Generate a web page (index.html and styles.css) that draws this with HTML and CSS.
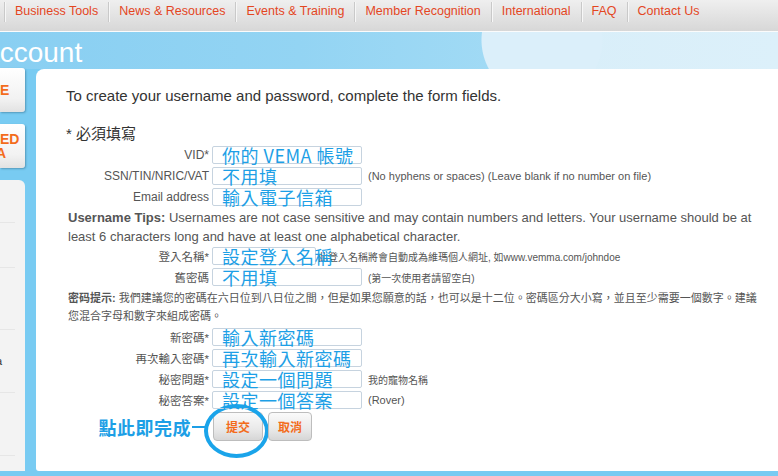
FILE: index.html
```html
<!DOCTYPE html>
<html lang="zh-Hant">
<head>
<meta charset="utf-8">
<title>Create Account</title>
<link rel="stylesheet" href="styles.css">
</head>
<body>
<nav class="nav">
  <a class="nav-item">Business Tools</a>
  <a class="nav-item">News &amp; Resources</a>
  <a class="nav-item">Events &amp; Training</a>
  <a class="nav-item">Member Recognition</a>
  <a class="nav-item">International</a>
  <a class="nav-item">FAQ</a>
  <a class="nav-item">Contact Us</a>
</nav>
<header class="header">
  <h1 class="title">Account</h1>
</header>
<div class="content">
  <aside class="side">
    <div class="side-btn"><span class="side-text">E</span></div>
    <div class="side-btn side-btn-two"><span class="side-text">ED</span><span class="side-text side-text-cut">A</span></div>
    <ul class="side-list">
      <li class="side-item"></li>
      <li class="side-item"></li>
      <li class="side-item"></li>
      <li class="side-item side-item-text"><span class="side-cut">a</span></li>
      <li class="side-item"></li>
      <li class="side-item"></li>
    </ul>
  </aside>
  <main class="panel">
    <p class="intro">To create your username and password, complete the form fields.</p>
    <p class="req">* 必須填寫</p>
    <div class="row"><span class="label">VID*</span><span class="field">你的 VEMA 帳號</span></div>
    <div class="row"><span class="label">SSN/TIN/NRIC/VAT</span><span class="field">不用填</span><span class="hint">(No hyphens or spaces) (Leave blank if no number on file)</span></div>
    <div class="row"><span class="label">Email address</span><span class="field">輸入電子信箱</span></div>
    <p class="tips"><b class="tips-head">Username Tips:</b> Usernames are not case sensitive and may contain numbers and letters. Your username should be at least 6 characters long and have at least one alphabetical character.</p>
    <div class="row row-tight"><span class="label label-cjk">登入名稱*</span><span class="field field-short">設定登入名稱</span><span class="hint hint-cjk hint-tight">此登入名稱將會自動成為維瑪個人網址, 如www.vemma.com/johndoe</span></div>
    <div class="row"><span class="label label-cjk">舊密碼</span><span class="field">不用填</span><span class="hint hint-cjk">(第一次使用者請留空白)</span></div>
    <p class="tips tips-cjk"><b class="tips-head">密码提示:</b> 我們建議您的密碼在六日位到八日位之間，但是如果您願意的話，也可以是十二位。密碼區分大小寫，並且至少需要一個數字。建議您混合字母和數字來組成密碼。</p>
    <div class="row"><span class="label label-cjk">新密碼*</span><span class="field">輸入新密碼</span></div>
    <div class="row"><span class="label label-cjk">再次輸入密碼*</span><span class="field">再次輸入新密碼</span></div>
    <div class="row"><span class="label label-cjk">秘密問題*</span><span class="field">設定一個問題</span><span class="hint hint-cjk">我的寵物名稱</span></div>
    <div class="row"><span class="label label-cjk">秘密答案*</span><span class="field">設定一個答案</span><span class="hint">(Rover)</span></div>
    <div class="actions">
      <span class="note">點此即完成<span class="note-line"></span></span>
      <button class="btn btn-submit">提交<span class="circle"></span></button>
      <button class="btn">取消</button>
    </div>
  </main>
</div>
</body>
</html>
```

FILE: styles.css
```css
html, body {
  margin: 0;
  padding: 0;
}
body {
  width: 778px;
  height: 476px;
  overflow: hidden;
  font-family: "Liberation Sans", "Noto Sans CJK TC", sans-serif;
  background: #78cbf2;
}

/* top navigation */
.nav {
  display: flex;
  height: 31px;
  padding-left: 4px;
  background: linear-gradient(#efefef, #d7d7d7);
  border-bottom: 1px solid #fbfbfb;
  box-sizing: content-box;
}
.nav-item {
  display: block;
  margin-top: 2px;
  height: 18px;
  padding: 2px 10px 0 10px;
  border-left: 1px solid #c9c9c9;
  box-shadow: inset 1px 0 0 #f7f7f7;
  font-size: 12.5px;
  line-height: 15px;
  color: #e4461f;
  white-space: nowrap;
}

/* header band */
.header {
  height: 37px;
  background:
    radial-gradient(circle at 542px 8px, #dbeffa 0, #dbeffa 60px, rgba(219,239,250,0) 61px),
    linear-gradient(90deg, #89cff2 0, #93d4f3 300px, #a3dbf5 525px, #d8eef9 528px, #dcf0fa 100%);
  overflow: hidden;
}
.title {
  margin: 0 0 0 -19px;
  font-weight: normal;
  font-size: 28px;
  line-height: 37px;
  color: #ffffff;
  padding-top: 2px;
}

/* content area */
.content {
  display: flex;
  height: 407px;
  padding-bottom: 5px;
  box-sizing: border-box;
  gap: 11px;
}
.side {
  width: 25px;
  display: flex;
  flex-direction: column;
}
.side-btn {
  height: 44px;
  margin-top: -1px;
  background: linear-gradient(#ffffff, #f2f2f2 70%, #e2e2e2);
  border-radius: 0 3px 3px 0;
  box-shadow: 1px 1px 2px rgba(40,90,120,0.45);
  display: flex;
  flex-direction: column;
  justify-content: center;
  overflow: hidden;
}
.side-btn-two {
  margin-top: 12px;
}
.side-text {
  font-size: 14px;
  font-weight: bold;
  line-height: 14px;
  color: #f36c1c;
}
.side-text-cut {
  margin-left: -4px;
}
.side-list {
  list-style: none;
  margin: 12px 0 0 0;
  padding: 0;
  background: #f3f3f3;
  border-radius: 0 6px 0 0;
  flex: 1;
  overflow: hidden;
}
.side-item {
  height: 42px;
  border-bottom: 1px solid #e6e6e6;
  margin-right: 10px;
}
.side-item:nth-child(2) { height: 44px; }
.side-item:nth-child(3) { height: 61px; }
.side-item:nth-child(4) { height: 62px; }
.side-item:nth-child(5) { height: 62px; }
.side-item:nth-child(6) { border-bottom: none; }
.side-item-text {
  display: flex;
  align-items: center;
}
.side-cut {
  margin-left: -4px;
  font-size: 11px;
  color: #333;
}

/* main panel */
.panel {
  flex: 1;
  background: #ffffff;
  border-radius: 8px 0 0 3px;
  padding: 18px 0 0 30px;
  box-sizing: border-box;
  color: #555;
}
.intro {
  margin: 0;
  font-size: 15px;
  line-height: 18px;
  color: #333;
}
.req {
  margin: 20px 0 2px 0;
  font-size: 15px;
  line-height: 18px;
  color: #333;
}
.row {
  display: flex;
  align-items: center;
  height: 18px;
  margin-top: 3px;
}
.row-tight {
  margin-top: 1px;
}
.label {
  width: 143px;
  flex: none;
  text-align: right;
  font-size: 12px;
  color: #555;
  white-space: nowrap;
}
.label-cjk {
  font-size: 11.5px;
}
.field {
  position: relative;
  z-index: 1;
  flex: none;
  width: 150px;
  height: 18px;
  margin-left: 3px;
  box-sizing: border-box;
  border: 1px solid #c6d3df;
  border-radius: 2px;
  padding-left: 9px;
  font-family: "Noto Sans CJK TC", "Liberation Sans", sans-serif;
  font-size: 18px;
  line-height: 16px;
  letter-spacing: 0.5px;
  color: #1d9fe6;
  white-space: nowrap;
}
.field-short {
  width: 104px;
}
.hint {
  margin-left: 6px;
  font-size: 11px;
  color: #555;
  white-space: nowrap;
}
.hint-cjk {
  font-size: 10px;
}
.hint-tight {
  margin-left: 2px;
}
.tips {
  margin: 2px 0 0 2px;
  width: 692px;
  font-size: 13px;
  line-height: 19px;
  color: #555;
}
.tips-cjk {
  margin-top: 3px;
  font-size: 11px;
  line-height: 18px;
}
.tips-head {
  color: #555;
}

/* actions */
.actions {
  display: flex;
  align-items: center;
  margin-top: 3px;
  height: 29px;
}
.note {
  width: 141px;
  flex: none;
  display: flex;
  justify-content: flex-end;
  align-items: center;
  font-family: "Noto Sans CJK TC", sans-serif;
  font-size: 18px;
  font-weight: bold;
  color: #1d9fe6;
  letter-spacing: 0.5px;
}
.note-line {
  display: block;
  width: 15px;
  height: 2px;
  background: #1d9fe6;
  margin-left: 1px;
}
.btn {
  position: relative;
  height: 29px;
  margin-left: 5px;
  padding: 0;
  width: 44px;
  border: 1px solid #bdbdbd;
  border-radius: 4px;
  background: linear-gradient(#fafafa, #e9e9e9 60%, #d6d6d6);
  font-family: "Noto Sans CJK TC", sans-serif;
  font-size: 12px;
  font-weight: bold;
  color: #f36c1c;
}
.btn-submit {
  width: 50px;
  margin-left: 6px;
}
.circle {
  position: absolute;
  left: -10px;
  top: -9px;
  width: 57px;
  height: 46px;
  border: 4px solid #1aa4ea;
  border-radius: 50%;
}
```
